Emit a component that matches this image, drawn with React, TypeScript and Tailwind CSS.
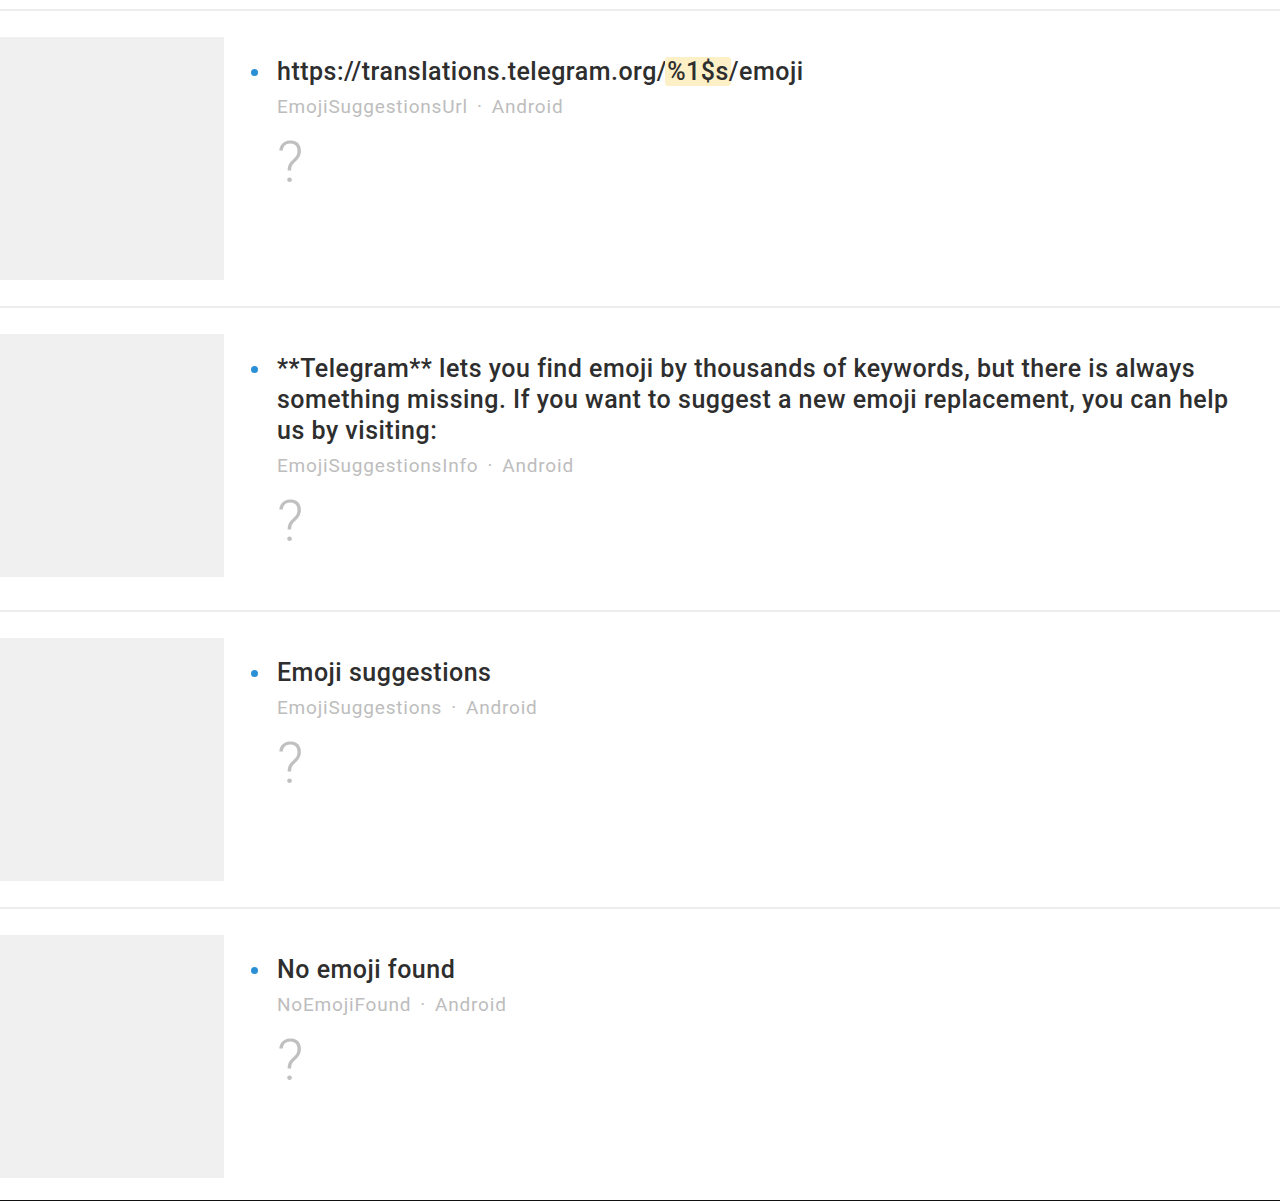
import React from "react";

type Item = {
  title: React.ReactNode;
  keyName: string;
};

const items: Item[] = [
  {
    title: (
      <>
        https://translations.telegram.org/
        <span className="bg-[#fdf0c6] rounded-[3px] px-[2px] -mx-[2px]">%1$s</span>
        /emoji
      </>
    ),
    keyName: "EmojiSuggestionsUrl",
  },
  {
    title:
      "**Telegram** lets you find emoji by thousands of keywords, but there is always something missing. If you want to suggest a new emoji replacement, you can help us by visiting:",
    keyName: "EmojiSuggestionsInfo",
  },
  { title: "Emoji suggestions", keyName: "EmojiSuggestions" },
  { title: "No emoji found", keyName: "NoEmojiFound" },
];

function Row({ item, last }: { item: Item; last?: boolean }) {
  return (
    <div
      className={
        "flex border-t-2 border-[#ececec] pt-[26px] " +
        (last ? "pb-[22px]" : "pb-[26px]")
      }
    >
      <div className="w-[224px] h-[243px] shrink-0 bg-[#f0f0f0]" />
      <div className="flex-1 pt-[19px] pb-[33px] pr-[30px]">
        <div className="flex">
          <div className="w-[53px] shrink-0 flex justify-end pr-[19px] pt-[13px]">
            <div className="w-[7px] h-[7px] rounded-full bg-[#2b8fd6]" />
          </div>
          <div className="flex-1">
            <div className="text-[25px] leading-[31px] tracking-[0.5px] text-[#2e2e2e] font-medium">
              {item.title}
            </div>
            <div className="mt-[8px] text-[19px] leading-[24px] tracking-[0.8px] text-[#bdbdbd]">
              {item.keyName}
              <span className="mx-[9px]">·</span>
              Android
            </div>
            <div className="mt-[13px] text-[58px] leading-[60px] font-light text-[#c0c0c0]">
              ?
            </div>
          </div>
        </div>
      </div>
    </div>
  );
}

export default function App() {
  return (
    <div
      className="w-[1280px] h-[1201px] bg-white overflow-hidden"
      style={{ fontFamily: "Roboto, 'Liberation Sans', sans-serif" }}
    >
      <div className="h-[9px]" />
      {items.map((it, i) => (
        <Row key={i} item={it} last={i === items.length - 1} />
      ))}
      <div className="h-[2px] bg-[#111]" />
    </div>
  );
}
